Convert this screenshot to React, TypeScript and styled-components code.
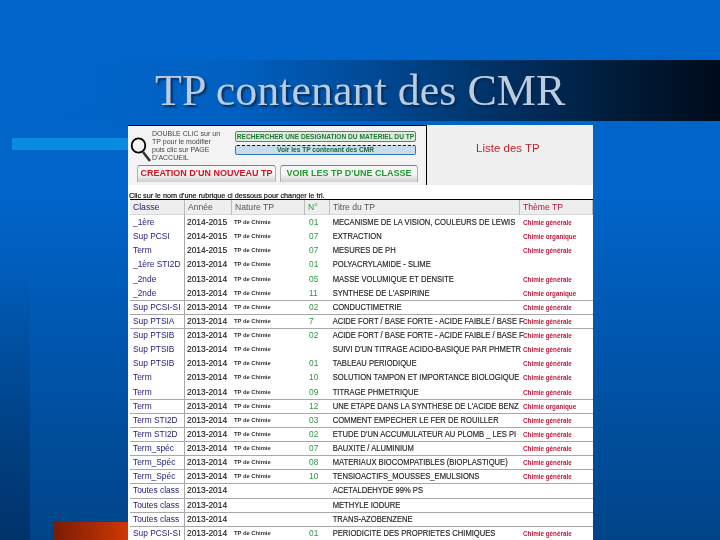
import React from "react";
import styled, { createGlobalStyle } from "styled-components";

const GlobalStyle = createGlobalStyle`
    html, body {
        margin: 0;
        padding: 0;
        background: #0060c0;
    }
`;

interface TpRow {
    classe: string;
    annee: string;
    nature?: string;
    num?: string;
    titre: string;
    theme?: string;
    ruled?: boolean;
}

const GEN = "Chimie générale";
const ORG = "Chimie organique";
const NAT = "TP de Chimie";

const rows: TpRow[] = [
    { classe: "_1ère", annee: "2014-2015", nature: NAT, num: "01", titre: "MECANISME DE LA VISION, COULEURS DE LEWIS", theme: GEN },
    { classe: "Sup PCSI", annee: "2014-2015", nature: NAT, num: "07", titre: "EXTRACTION", theme: ORG },
    { classe: "Term", annee: "2014-2015", nature: NAT, num: "07", titre: "MESURES DE PH", theme: GEN },
    { classe: "_1ère STI2D", annee: "2013-2014", nature: NAT, num: "01", titre: "POLYACRYLAMIDE - SLIME" },
    { classe: "_2nde", annee: "2013-2014", nature: NAT, num: "05", titre: "MASSE VOLUMIQUE ET DENSITE", theme: GEN },
    { classe: "_2nde", annee: "2013-2014", nature: NAT, num: "11", titre: "SYNTHESE DE L'ASPIRINE", theme: ORG },
    { classe: "Sup PCSI-SI", annee: "2013-2014", nature: NAT, num: "02", titre: "CONDUCTIMETRIE", theme: GEN, ruled: true },
    { classe: "Sup PTSIA", annee: "2013-2014", nature: NAT, num: "7", titre: "ACIDE FORT / BASE FORTE - ACIDE FAIBLE / BASE F", theme: GEN, ruled: true },
    { classe: "Sup PTSIB", annee: "2013-2014", nature: NAT, num: "02", titre: "ACIDE FORT / BASE FORTE - ACIDE FAIBLE / BASE F", theme: GEN, ruled: true },
    { classe: "Sup PTSIB", annee: "2013-2014", nature: NAT, titre: "SUIVI D'UN TITRAGE ACIDO-BASIQUE PAR PHMETR", theme: GEN },
    { classe: "Sup PTSIB", annee: "2013-2014", nature: NAT, num: "01", titre: "TABLEAU PERIODIQUE", theme: GEN },
    { classe: "Term", annee: "2013-2014", nature: NAT, num: "10", titre: "SOLUTION TAMPON ET IMPORTANCE BIOLOGIQUE", theme: GEN },
    { classe: "Term", annee: "2013-2014", nature: NAT, num: "09", titre: "TITRAGE PHMETRIQUE", theme: GEN },
    { classe: "Term", annee: "2013-2014", nature: NAT, num: "12", titre: "UNE ETAPE DANS LA SYNTHESE DE L'ACIDE BENZ", theme: ORG, ruled: true },
    { classe: "Term STI2D", annee: "2013-2014", nature: NAT, num: "03", titre: "COMMENT EMPECHER LE FER DE ROUILLER", theme: GEN, ruled: true },
    { classe: "Term STI2D", annee: "2013-2014", nature: NAT, num: "02", titre: "ETUDE D'UN ACCUMULATEUR AU PLOMB _ LES PI", theme: GEN, ruled: true },
    { classe: "Term_spéc", annee: "2013-2014", nature: NAT, num: "07", titre: "BAUXITE / ALUMINIUM", theme: GEN, ruled: true },
    { classe: "Term_Spéc", annee: "2013-2014", nature: NAT, num: "08", titre: "MATERIAUX BIOCOMPATIBLES (BIOPLASTIQUE)", theme: GEN, ruled: true },
    { classe: "Term_Spéc", annee: "2013-2014", nature: NAT, num: "10", titre: "TENSIOACTIFS_MOUSSES_EMULSIONS", theme: GEN, ruled: true },
    { classe: "Toutes class", annee: "2013-2014", titre: "ACETALDEHYDE 99% PS", ruled: true },
    { classe: "Toutes class", annee: "2013-2014", titre: "METHYLE IODURE", ruled: true },
    { classe: "Toutes class", annee: "2013-2014", titre: "TRANS-AZOBENZENE", ruled: true },
    { classe: "Sup PCSI-SI", annee: "2013-2014", nature: NAT, num: "01", titre: "PERIODICITE DES PROPRIETES CHIMIQUES", theme: GEN, ruled: true },
];

function Magnifier() {
    return (
        <svg width="22" height="26" viewBox="0 0 22 26" fill="none">
            <ellipse cx="8.5" cy="8.5" rx="6.8" ry="7.2" stroke="#000" strokeWidth="1.8" />
            <path d="M13 15 L20 24" stroke="#333" strokeWidth="2.6" />
        </svg>
    );
}

export default function App() {
    return (
        <Slide>
            <GlobalStyle />
            <AccentBar />
            <BottomBar />
            <TitleBand>
                <Title>TP contenant des CMR</Title>
            </TitleBand>
            <Sheet>
                <TopArea>
                    <Toolbox>
                        <ToolRow>
                            <IconSlot><Magnifier /></IconSlot>
                            <HelpText>
                                DOUBLE CLIC sur un<br />
                                TP pour le modifier<br />
                                puis clic sur PAGE<br />
                                D'ACCUEIL
                            </HelpText>
                            <ActionColumn>
                                <SearchButton>RECHERCHER UNE DESIGNATION DU MATERIEL DU TP</SearchButton>
                                <CmrButton>Voir les TP contenant des CMR</CmrButton>
                            </ActionColumn>
                        </ToolRow>
                        <TabRow>
                            <BigTab $color="#d8101c" $width={139}>CREATION D'UN NOUVEAU TP</BigTab>
                            <BigTab $color="#1f9a2c" $width={138}>VOIR LES TP D'UNE CLASSE</BigTab>
                        </TabRow>
                    </Toolbox>
                    <ListTitle>Liste des TP</ListTitle>
                </TopArea>
                <Hint>Clic sur le nom d'une rubrique ci dessous pour changer le tri.</Hint>
                <Table>
                    <HeadRow>
                        <HeadCell $color="#23237a">Classe</HeadCell>
                        <HeadCell $color="#555">Année</HeadCell>
                        <HeadCell $color="#555">Nature TP</HeadCell>
                        <HeadCell $color="#2a9a3a">N°</HeadCell>
                        <HeadCell $color="#555">Titre du TP</HeadCell>
                        <HeadCell $color="#b01535">Thème TP</HeadCell>
                    </HeadRow>
                    {rows.map((row, i) => (
                        <Row key={i} $ruled={row.ruled}>
                            <ClassCell>{row.classe}</ClassCell>
                            <YearCell>{row.annee}</YearCell>
                            <NatureCell>{row.nature}</NatureCell>
                            <NumCell>{row.num}</NumCell>
                            <TitleCell>{row.titre}</TitleCell>
                            <ThemeCell>{row.theme}</ThemeCell>
                        </Row>
                    ))}
                </Table>
            </Sheet>
        </Slide>
    );
}

const Slide = styled.div`
    position: relative;
    width: 720px;
    height: 540px;
    overflow: hidden;
    padding-top: 60px;
    box-sizing: border-box;
    background:
        linear-gradient(180deg, rgba(0, 25, 60, 0) 0, rgba(0, 25, 60, 0.4) 100%) bottom left / 30px 270px no-repeat,
        linear-gradient(180deg, #0066cc 0, #0064c8 200px, #004488 540px);
`;

const AccentBar = styled.div`
    position: absolute;
    left: 12px;
    top: 138px;
    width: 116px;
    height: 12px;
    background: #0a8ce0;
`;

const BottomBar = styled.div`
    position: absolute;
    left: 54px;
    bottom: 0;
    width: 74px;
    height: 18px;
    background: linear-gradient(90deg, #7a1c04, #d03804);
`;

const TitleBand = styled.div`
    height: 61px;
    margin-bottom: 4px;
    padding-left: 155px;
    display: flex;
    align-items: center;
    background: linear-gradient(90deg, rgba(0, 96, 192, 0) 60px, #0060c0 240px, #004c9a 360px, #00356c 480px, #001f40 600px, #000c1c 715px);
`;

const Title = styled.h1`
    margin: 0;
    font-family: "Liberation Serif", serif;
    font-weight: 400;
    font-size: 44px;
    line-height: 61px;
    white-space: nowrap;
    color: #bccbdd;
    text-shadow: 2px 2px 2px rgba(5, 35, 75, 0.8);
    filter: blur(0.3px);
`;

const Sheet = styled.div`
    margin-left: 128px;
    width: 465px;
    height: 415px;
    overflow: hidden;
    background: #fff;
    filter: blur(0.35px);
    font-family: "Liberation Sans", Arial, sans-serif;
`;

const TopArea = styled.div`
    display: flex;
    height: 60px;
    background: #f0f0f0;
`;

const Toolbox = styled.div`
    width: 299px;
    border-top: 1px solid #000;
    border-right: 1px solid #000;
    box-sizing: border-box;
    background: #f3f3f3;
    display: flex;
    flex-direction: column;
`;

const ToolRow = styled.div`
    display: flex;
    height: 39px;
`;

const IconSlot = styled.div`
    width: 24px;
    padding: 11px 0 0 2px;
    box-sizing: border-box;
`;

const HelpText = styled.div`
    width: 83px;
    padding-top: 4px;
    font-size: 7px;
    line-height: 8px;
    color: #444;
    white-space: nowrap;
`;

const ActionColumn = styled.div`
    display: flex;
    flex-direction: column;
    gap: 3px;
    padding-top: 5px;
    width: 181px;
`;

const SearchButton = styled.div`
    height: 9px;
    border: 1px solid #3f9a55;
    border-radius: 2px;
    background: #dfe9df;
    color: #1c7a30;
    font-size: 6.6px;
    font-weight: 700;
    line-height: 9px;
    text-align: center;
    white-space: nowrap;
`;

const CmrButton = styled.div`
    height: 8px;
    border: 1px solid #2a78b8;
    border-top: 1px dashed #111;
    border-radius: 2px;
    background: #c8dcea;
    color: #1a6a3a;
    font-size: 6.6px;
    line-height: 8px;
    font-weight: 700;
    text-align: center;
    white-space: nowrap;
`;

const TabRow = styled.div`
    display: flex;
    gap: 4px;
    padding-left: 9px;
`;

const BigTab = styled.div<{ $color: string; $width: number }>`
    width: ${(p) => p.$width}px;
    height: 17px;
    box-sizing: border-box;
    border: 1px solid #b0b0b0;
    border-top-color: #808080;
    border-bottom: 0;
    border-radius: 3px 3px 0 0;
    background: linear-gradient(180deg, #f6f6f6 50%, #cfcfcf);
    color: ${(p) => p.$color};
    font-size: 9px;
    font-weight: 700;
    line-height: 14px;
    text-align: center;
    white-space: nowrap;
`;

const ListTitle = styled.div`
    flex: 1;
    padding: 17px 0 0 49px;
    font-size: 11.5px;
    line-height: 13px;
    color: #c81e28;
`;

const Hint = styled.div`
    height: 14px;
    padding-left: 1px;
    background: #fff;
    font-size: 8px;
    line-height: 21px;
    color: #111;
    -webkit-text-stroke: 0.2px #111;
    white-space: nowrap;
    transform: scaleX(0.91);
    transform-origin: left;
`;

const Table = styled.div`
    width: 463px;
    margin-left: 2px;
    display: flex;
    flex-direction: column;
`;

const COLUMNS = "55px 47px 73px 25px 190px 73px";

const HeadRow = styled.div`
    display: grid;
    grid-template-columns: ${COLUMNS};
    height: 16px;
    border-top: 1px solid #000;
    box-sizing: border-box;
    background: #eeeeee;
    border-bottom: 1px solid #d8d8d8;
`;

const HeadCell = styled.div<{ $color: string }>`
    padding-left: 3px;
    border-right: 1px solid #bbb;
    color: ${(p) => p.$color};
    font-size: 8.6px;
    line-height: 15px;
    white-space: nowrap;
`;

const Row = styled.div<{ $ruled?: boolean }>`
    display: grid;
    grid-template-columns: ${COLUMNS};
    height: 14.14px;
    box-sizing: border-box;
    border-top: 1px solid ${(p) => (p.$ruled ? "#a8a8a8" : "transparent")};
`;

const BaseCell = styled.div`
    padding-left: 3px;
    font-size: 8.4px;
    line-height: 13px;
    white-space: nowrap;
    color: #222;
`;

const ClassCell = styled(BaseCell)`
    color: #1c1c78;
    border-right: 1px solid #a8a8a8;
    margin-top: -1px;
    padding-top: 1px;
`;

const YearCell = styled(BaseCell)`
    padding-left: 2px;
    -webkit-text-stroke: 0.15px #222;
`;

const NatureCell = styled(BaseCell)`
    padding-left: 2px;
    font-size: 5.8px;
    font-weight: 700;
    color: #333;
`;

const NumCell = styled(BaseCell)`
    padding-left: 4px;
    color: #2a9a3a;
`;

const TitleCell = styled(BaseCell)`
    font-size: 8.5px;
    -webkit-text-stroke: 0.15px #222;
    transform: scaleX(0.895);
    transform-origin: left;
`;

const ThemeCell = styled(BaseCell)`
    font-size: 6.3px;
    font-weight: 700;
    color: #c01535;
`;
